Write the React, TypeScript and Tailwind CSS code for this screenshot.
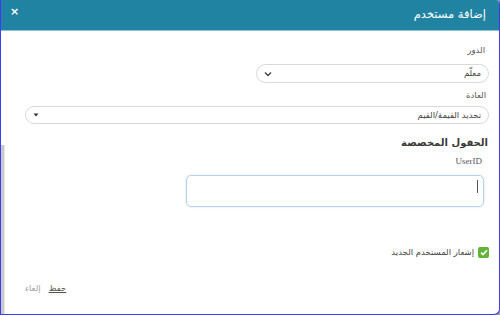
import React from "react";

export default function App() {
  const ar = { fontFamily: '"DejaVu Sans", "Noto Sans", sans-serif' };
  return (
    <div className="w-[500px] h-[315px] bg-[#9a9a9a]">
      <div
        className="relative w-[500px] h-[315px] bg-white border-l border-r border-b border-[#3c3cf0] rounded-tr-[4px] rounded-br-[6px] flex flex-col overflow-hidden"
        style={ar}
      >
        <div className="h-[31px] shrink-0 bg-[#1f83a1] border-b border-[#8cc1d0] flex items-center justify-between pl-[9px] pr-[10px]">
          <span className="text-white text-[11px] font-bold leading-none mb-[8px]">×</span>
          <span className="text-white text-[11.5px] leading-none mr-[3px]" dir="rtl">إضافة مستخدم</span>
        </div>

        <div className="absolute left-0 top-[145px] bottom-0 w-[4px] bg-[#c9c9c9] border-r border-[#e6e6e6]" />

        <div className="flex flex-col items-start pr-[10px] pl-[24px]" dir="rtl">
          <div className="text-[8.5px] text-[#555] mt-[13px] mr-[4px] leading-[12px]">الدور</div>
          <div className="mt-[8px] w-[233px] h-[19px] rounded-full border border-[#d9d9d9] flex items-center justify-between pr-[7px] pl-[7px]">
            <span className="text-[8.5px] text-[#444]">معلّم</span>
            <svg width="8" height="6" viewBox="0 0 8 6">
              <path d="M1 1.5 L4 4.5 L7 1.5" fill="none" stroke="#444" strokeWidth="1.4" />
            </svg>
          </div>
          <div className="text-[8.5px] text-[#555] mt-[6px] mr-[3px] leading-[12px]">العادة</div>
          <div className="mt-[5px] w-full h-[18px] rounded-full border border-[#d9d9d9] flex items-center justify-between pr-[7px] pl-[7px]">
            <span className="text-[8.5px] text-[#444]">تحديد القيمة/القيم</span>
            <svg width="6" height="4" viewBox="0 0 6 4">
              <path d="M0.5 0.5 L5.5 0.5 L3 3.5 Z" fill="#333" />
            </svg>
          </div>
          <div className="text-[10px] font-semibold text-[#3a3a3a] mt-[12px] mr-[1px] leading-[14px]">الحقول المخصصة</div>
          <div
            className="text-[9px] text-[#555] mt-[5px] mr-[7px] leading-[12px]"
            style={{ fontFamily: '"Liberation Serif", serif' }}
            dir="ltr"
          >
            UserID
          </div>
          <div className="mt-[8px] w-[298px] h-[32px] mr-[5px] rounded-[5px] border border-[#b9d3e6] shadow-[0_0_2px_rgba(120,170,210,0.4)] relative">
            <div className="absolute right-[5px] top-[4px] w-[1px] h-[13px] bg-[#555]" />
          </div>
          <div className="mt-[39px] flex items-center gap-[4px]">
            <div className="w-[11px] h-[11px] rounded-[2px] bg-[#62b33a] flex items-center justify-center">
              <svg width="8" height="7" viewBox="0 0 8 7">
                <path d="M1 3.6 L3 5.6 L7 1.2" fill="none" stroke="white" strokeWidth="1.7" />
              </svg>
            </div>
            <span className="text-[8.5px] text-[#444]">إشعار المستخدم الجديد</span>
          </div>
        </div>

        <div className="mt-[23px] flex items-center gap-[8px] pl-[24px]" dir="ltr">
          <span className="text-[8.5px] text-[#a0a0a0]">إلغاء</span>
          <span className="text-[8.5px] text-[#555] underline">حفظ</span>
        </div>
      </div>
    </div>
  );
}
